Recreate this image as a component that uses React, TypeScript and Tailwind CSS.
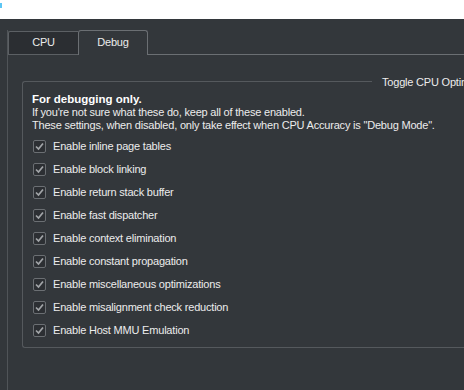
import React from "react";

const options = [
  "Enable inline page tables",
  "Enable block linking",
  "Enable return stack buffer",
  "Enable fast dispatcher",
  "Enable context elimination",
  "Enable constant propagation",
  "Enable miscellaneous optimizations",
  "Enable misalignment check reduction",
  "Enable Host MMU Emulation",
];

const CheckBox = () => (
  <span className="flex h-[13px] w-[13px] shrink-0 items-center justify-center rounded-[2px] border border-[#6b6f73] bg-[#2c2f33]">
    <svg width="11" height="11" viewBox="0 0 11 11">
      <polyline
        points="2,5.5 4.5,8 9,2.5"
        fill="none"
        stroke="#a2a5a8"
        strokeWidth="1.7"
      />
    </svg>
  </span>
);

const App = () => {
  return (
    <div
      className="flex h-[390px] w-[464px] flex-col overflow-hidden bg-[#33373b] text-[11px] tracking-[-0.2px] text-[#ececec]"
      style={{ fontFamily: '"Liberation Sans", Arial, sans-serif' }}
    >
      <div className="h-[19px] shrink-0 bg-white pt-[3px]">
        <div className="h-[5px] w-[2px] bg-[#5cc6f4]" />
      </div>

      <div className="flex flex-1 pt-[11px] pl-[7px]">
        <div className="flex flex-1 flex-col border-l border-[#505458]">
          {/* tab bar */}
          <div className="flex h-[25px] shrink-0 items-end">
            <div className="flex h-[24px] w-[70px] items-center justify-center rounded-tl-[2px] border-t border-l border-b border-[#5c6064] bg-[#2b2e32] pb-[1px]">
              CPU
            </div>
            <div className="flex h-[25px] w-[70px] items-center justify-center rounded-t-[3px] border-x border-t border-[#6b6f73] bg-[#33373b] pb-[2px]">
              Debug
            </div>
            <div className="h-[1px] flex-1 self-end bg-[#6b6f73]" />
          </div>

          {/* pane */}
          <div className="flex-1 pl-[14px] pt-[26px]">
            <div className="relative rounded-l-[3px] border-y border-l border-[#55595d] pl-[9px] pt-[11px] pb-[5px]">
              <div className="absolute -top-[8px] left-[349px] bg-[#33373b] pl-[10px] whitespace-nowrap">
                Toggle CPU Optimizations
              </div>
              <div className="leading-[13px] whitespace-nowrap">
                <div className="text-[11.5px] font-bold tracking-normal text-white">For debugging only.</div>
                <div>If you're not sure what these do, keep all of these enabled.</div>
                <div>
                  These settings, when disabled, only take effect when CPU Accuracy is "Debug Mode".
                </div>
              </div>
              <div className="mt-[3px] flex flex-col">
                {options.map((label) => (
                  <div key={label} className="flex h-[23px] items-center gap-[7px] pl-[1px]">
                    <CheckBox />
                    <span className="whitespace-nowrap">{label}</span>
                  </div>
                ))}
              </div>
            </div>
          </div>
        </div>
      </div>
    </div>
  );
};

export default App;
